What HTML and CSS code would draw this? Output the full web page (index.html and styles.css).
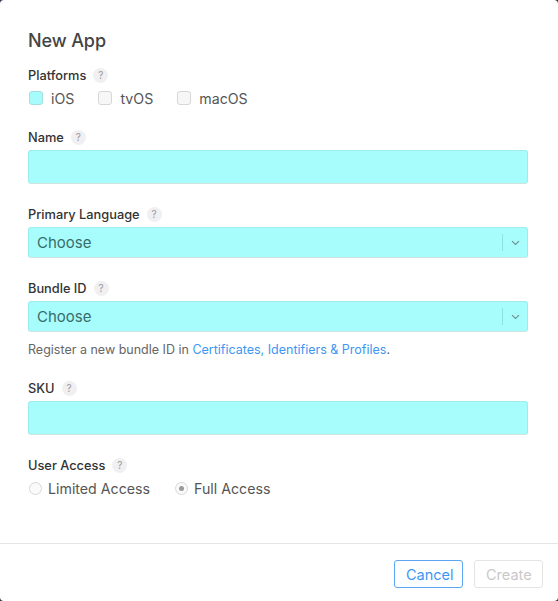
FILE: index.html
```html
<!DOCTYPE html>
<html lang="en">
<head>
<meta charset="UTF-8">
<meta name="viewport" content="width=device-width, initial-scale=1.0">
<title>New App</title>
<link rel="stylesheet" href="styles.css">
</head>
<body>

<div class="modal">
  <div class="modal-body">
    <h1 class="title">New App</h1>

    <div class="field field-platforms">
      <div class="label">Platforms <span class="help">?</span></div>
      <div class="options">
        <label class="check"><span class="box checked"></span>iOS</label>
        <label class="check"><span class="box"></span>tvOS</label>
        <label class="check"><span class="box"></span>macOS</label>
      </div>
    </div>

    <div class="field">
      <div class="label">Name <span class="help">?</span></div>
      <div class="input"></div>
    </div>

    <div class="field">
      <div class="label">Primary Language <span class="help">?</span></div>
      <div class="select">
        <span class="select-value">Choose</span>
        <span class="select-arrow">
          <svg width="9" height="6" viewBox="0 0 9 6"><path d="M1 1.2 L4.5 4.5 L8 1.2" fill="none" stroke="#6f8f8f" stroke-width="1.1"/></svg>
        </span>
      </div>
    </div>

    <div class="field">
      <div class="label">Bundle ID <span class="help">?</span></div>
      <div class="select">
        <span class="select-value">Choose</span>
        <span class="select-arrow">
          <svg width="9" height="6" viewBox="0 0 9 6"><path d="M1 1.2 L4.5 4.5 L8 1.2" fill="none" stroke="#6f8f8f" stroke-width="1.1"/></svg>
        </span>
      </div>
      <p class="hint">Register a new bundle ID in <a href="#">Certificates, Identifiers &amp; Profiles</a>.</p>
    </div>

    <div class="field">
      <div class="label">SKU <span class="help">?</span></div>
      <div class="input"></div>
    </div>

    <div class="field field-access">
      <div class="label">User Access <span class="help">?</span></div>
      <div class="options">
        <label class="radio"><span class="dot"></span>Limited Access</label>
        <label class="radio"><span class="dot selected"></span>Full Access</label>
      </div>
    </div>
  </div>

  <div class="modal-footer">
    <button class="btn btn-cancel">Cancel</button>
    <button class="btn btn-create" disabled>Create</button>
  </div>
</div>

</body>
</html>
```

FILE: styles.css
```css
/* Reset */
* {
  box-sizing: border-box;
  margin: 0;
  padding: 0;
  font-family: 'Inter', 'Helvetica Neue', sans-serif;
}

body {
  width: 558px;
  height: 601px;
  background: #2b3147;
  overflow: hidden;
}

/* Modal */
.modal {
  width: 558px;
  height: 601px;
  background: #fff;
  border-radius: 4px;
  display: flex;
  flex-direction: column;
}

.modal-body {
  padding: 30px 30px 0 28px;
  flex: 1;
}

.title {
  font-size: 18px;
  font-weight: 500;
  color: #444;
  letter-spacing: -0.1px;
  line-height: 22px;
  margin-bottom: 14px;
}

/* Fields */
.field {
  margin-bottom: 21px;
}

.label {
  display: flex;
  align-items: center;
  font-size: 12.8px;
  font-weight: 500;
  color: #333;
  height: 18px;
  margin-bottom: 4px;
}

.help {
  display: inline-flex;
  justify-content: center;
  align-items: center;
  width: 15px;
  height: 15px;
  margin-left: 7px;
  border-radius: 50%;
  background: #f0f0f2;
  color: #999;
  font-size: 10px;
  font-weight: 400;
}

.field-platforms .label,
.field-access .label {
  margin-bottom: 5px;
}

.options {
  display: flex;
  align-items: center;
  height: 18px;
}

.check,
.radio {
  display: flex;
  align-items: center;
  font-size: 14.2px;
  color: #555;
}

.check {
  margin-right: 23px;
}

.box {
  width: 14px;
  height: 14px;
  margin: 0 8px 0 1px;
  border: 1px solid #d6d6d6;
  border-radius: 3px;
  background: #f7f7f7;
}

.box.checked {
  background: #a6fcfc;
  border-color: #a4dede;
}

.input,
.select {
  width: 500px;
  border: 1px solid #9eecec;
  border-bottom-color: #cfe3e3;
  border-radius: 3px;
  background: #a6fdfc;
}

.input {
  height: 34px;
}

.select {
  height: 31px;
  margin-top: 4px;
  display: flex;
  align-items: center;
  justify-content: space-between;
}

.select-value {
  padding-left: 8px;
  font-size: 15px;
  color: #3a6c6a;
}

.select-arrow {
  display: flex;
  align-items: center;
  justify-content: center;
  width: 25px;
  height: 17px;
  border-left: 1px solid #8fe0df;
}

.hint {
  margin-top: 10px;
  font-size: 12.5px;
  line-height: 16px;
  color: #666;
}

.hint a {
  color: #3d97f2;
  text-decoration: none;
}

.radio {
  margin-right: 24px;
}

.dot {
  position: relative;
  width: 13px;
  height: 13px;
  margin: 0 6px 0 1px;
  border: 1px solid #d8d8d8;
  border-radius: 50%;
  background: #fafafa;
}

.dot.selected::after {
  content: '';
  position: absolute;
  left: 3px;
  top: 3px;
  width: 5px;
  height: 5px;
  border-radius: 50%;
  background: #9a9a9a;
}

/* Footer */
.modal-footer {
  display: flex;
  justify-content: flex-end;
  gap: 11px;
  padding: 16px 15px 13px;
  border-top: 1px solid #e4e4e4;
}

.btn {
  height: 28px;
  padding: 0 11px;
  font-size: 14.5px;
  background: #fff;
  border-radius: 3px;
  border: 1px solid #e4e4e4;
}

.btn-cancel {
  width: 69px;
  color: #3d97f2;
  border-color: #5aa6f2;
}

.btn-create {
  width: 69px;
  color: #c9c9c9;
}
```
